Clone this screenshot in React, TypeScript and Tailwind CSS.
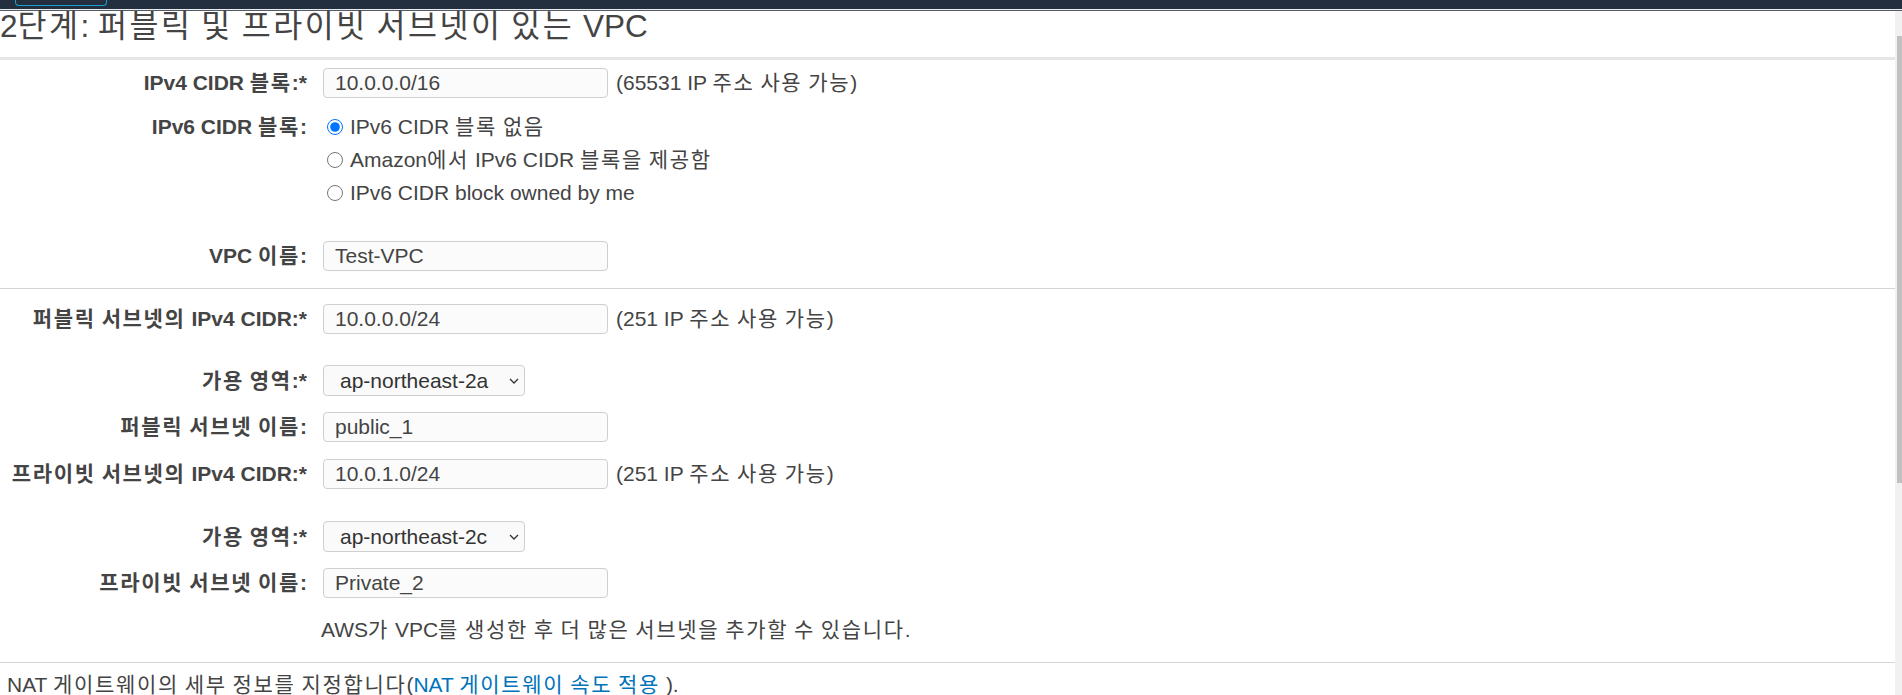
import React from "react";

type Field = {
  label: string;
  value: string;
  kind: "input" | "select";
  help?: string;
  gap: string;
};

// hangul runs get a little extra advance so they sit as wide as in the console font
function K({ children }: { children: string }) {
  const parts = children.split(/([\uAC00-\uD7A3]+)/);
  return (
    <>
      {parts.map((p, i) =>
        /[\uAC00-\uD7A3]/.test(p) ? (
          <span key={i} className="tracking-[0.08em]">
            {p}
          </span>
        ) : (
          p
        )
      )}
    </>
  );
}

function TextBox({ value }: { value: string }) {
  return (
    <div className="flex h-[30px] w-[285px] items-center rounded-[4px] border border-[#cfcfcf] bg-[#fbfbfb] pl-[11px] leading-[28px] text-[#444]">
      {value}
    </div>
  );
}

function SelectBox({ value }: { value: string }) {
  return (
    <div className="flex h-[31px] w-[202px] items-center justify-between rounded-[4px] border border-[#cfcfcf] bg-[#fafafa] pl-[16px] pr-[5px] text-[#333]">
      <span>{value}</span>
      <svg width="10" height="6" viewBox="0 0 10 6" fill="none">
        <path d="M1 1l4 4 4-4" stroke="#333" strokeWidth="1.3" />
      </svg>
    </div>
  );
}

function Row({ label, children, top }: { label: string; children: React.ReactNode; top: string }) {
  return (
    <div className={`flex items-center ${top}`}>
      <div className="w-[307px] whitespace-nowrap text-right font-bold text-[#444]">
        <K>{label}</K>
      </div>
      <div className="ml-[16px] flex items-center whitespace-nowrap">{children}</div>
    </div>
  );
}

export default function App() {
  const subnetFields: Field[] = [
    { label: "퍼블릭 서브넷의 IPv4 CIDR:*", value: "10.0.0.0/24", kind: "input", help: "(251 IP 주소 사용 가능)", gap: "mt-[15px]" },
    { label: "가용 영역:*", value: "ap-northeast-2a", kind: "select", gap: "mt-[31px]" },
    { label: "퍼블릭 서브넷 이름:", value: "public_1", kind: "input", gap: "mt-[16px]" },
    { label: "프라이빗 서브넷의 IPv4 CIDR:*", value: "10.0.1.0/24", kind: "input", help: "(251 IP 주소 사용 가능)", gap: "mt-[17px]" },
    { label: "가용 영역:*", value: "ap-northeast-2c", kind: "select", gap: "mt-[32px]" },
    { label: "프라이빗 서브넷 이름:", value: "Private_2", kind: "input", gap: "mt-[16px]" },
  ];

  const radios = ["IPv6 CIDR 블록 없음", "Amazon에서 IPv6 CIDR 블록을 제공함", "IPv6 CIDR block owned by me"];

  return (
    <div className="h-[695px] w-[1902px] overflow-hidden bg-white font-['Liberation_Sans','Noto_Sans_CJK_KR',sans-serif] text-[21px] leading-[24px] text-[#444]">
      <div className="h-[9px] bg-[#232f3e]">
        <div className="ml-[15px] h-[6px] w-[92px] rounded-b-[4px] border-x border-b border-[#1a9fd0]" />
      </div>
      <div className="h-px bg-[#e8eaed]" />
      <div className="h-px bg-[#545b64]" />

      <div className="flex h-[684px]">
        <div className="flex-1">
          <h1 className="h-[46px] whitespace-nowrap text-[31.5px] font-normal leading-[30px] text-[#444]">
            <K>2단계: 퍼블릭 및 프라이빗 서브넷이 있는 VPC</K>
          </h1>
          <div className="h-[3px] bg-[#e6e6e6]" />

          <Row label="IPv4 CIDR 블록:*" top="mt-[8px]">
            <TextBox value="10.0.0.0/16" />
            <span className="ml-[8px]">
              <K>(65531 IP 주소 사용 가능)</K>
            </span>
          </Row>

          <div className="mt-[12px] flex">
            <div className="w-[307px] text-right font-bold leading-[33px] text-[#444]">
              <K>IPv6 CIDR 블록:</K>
            </div>
            <div className="ml-[16px] flex flex-col">
              {radios.map((r, i) => (
                <label key={r} className="flex h-[33px] items-center whitespace-nowrap">
                  <input
                    type="radio"
                    name="ipv6"
                    defaultChecked={i === 0}
                    className="m-0 ml-[4px] mr-[7px] h-[16px] w-[16px]"
                  />
                  <span>
                    <K>{r}</K>
                  </span>
                </label>
              ))}
            </div>
          </div>

          <Row label="VPC 이름:" top="mt-[32px]">
            <TextBox value="Test-VPC" />
          </Row>

          <div className="mt-[17px] h-px bg-[#d4d4d4]" />

          {subnetFields.map((f, i) => (
            <Row key={i} label={f.label} top={f.gap}>
              {f.kind === "input" ? <TextBox value={f.value} /> : <SelectBox value={f.value} />}
              {f.help && (
                <span className="ml-[8px]">
                  <K>{f.help}</K>
                </span>
              )}
            </Row>
          ))}

          <p className="ml-[321px] mt-[20px] whitespace-nowrap">
            <K>AWS가 VPC를 생성한 후 더 많은 서브넷을 추가할 수 있습니다.</K>
          </p>

          <div className="mt-[20px] h-px bg-[#d4d4d4]" />

          <p className="ml-[7px] mt-[10px] whitespace-nowrap">
            <K>NAT 게이트웨이의 세부 정보를 지정합니다(</K>
            <a className="text-[#0073bb]">
              <K>NAT 게이트웨이 속도 적용</K>
            </a>{" "}
            ).
          </p>
        </div>

        <div className="w-[7px] bg-[#f1f1f1] pt-[25px]">
          <div className="ml-[2px] h-[447px] bg-[#c1c1c1]" />
        </div>
      </div>
    </div>
  );
}
